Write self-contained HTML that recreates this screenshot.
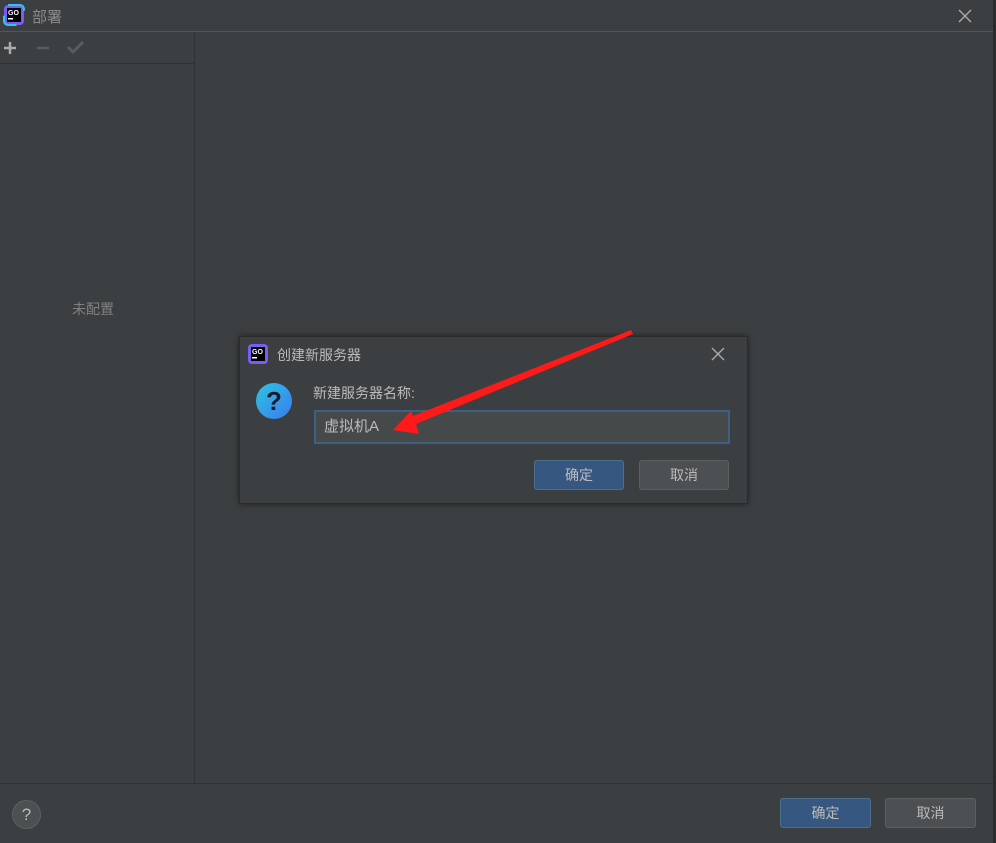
<!DOCTYPE html>
<html><head><meta charset="utf-8"><style>
*{margin:0;padding:0;box-sizing:border-box}
body{width:996px;height:843px;background:#3c3f41;font-family:"Liberation Sans","Noto Sans CJK SC",sans-serif;color:#bbb;position:relative;overflow:hidden;font-size:14px}
.a{position:absolute}
.btn{position:absolute;border-radius:3px;text-align:center;font-size:14px;color:#bbb}
.ok{background:#365880;border:1px solid #4c708c}
.cn{background:#4c5052;border:1px solid #5e6060}
</style></head><body>
<div class="a" style="left:0;top:0;width:996px;height:32px;background:#3c3f41;border-bottom:1px solid #555"></div>
<div class="a" style="left:993px;top:0;width:3px;height:843px;background:#2b2b2b"></div>
<svg class="a" style="left:3px;top:4px" width="22" height="22" viewBox="0 0 22 22"><rect x="1" y="1" width="20" height="20" rx="4" fill="#7b5cf0"/><rect x="1" y="1" width="20" height="20" rx="4" fill="none" stroke="#2fc7e8" stroke-width="2" stroke-dasharray="20 20"/><rect x="4" y="4" width="14" height="14" fill="#000"/><text x="5" y="11" font-size="7" fill="#fff" font-family="Liberation Sans" font-weight="bold">GO</text><rect x="5" y="14" width="5" height="1.5" fill="#fff"/></svg>
<div class="a" style="left:32px;top:6px;font-size:15px;color:#8a8a8a">部署</div>
<svg class="a" style="left:958px;top:9px" width="14" height="14"><path d="M1 1L13 13M13 1L1 13" stroke="#aaa" stroke-width="1.4"/></svg>
<div class="a" style="left:0;top:33px;width:195px;height:750px;border-right:1px solid #2f3133"></div>
<div class="a" style="left:0;top:63px;width:194px;height:1px;background:#323232"></div>
<svg class="a" style="left:3px;top:41px" width="14" height="14"><path d="M7 1V13M1 7H13" stroke="#aaa" stroke-width="2.5"/></svg>
<svg class="a" style="left:36px;top:41px" width="14" height="14"><path d="M1 7H13" stroke="#5a5d5f" stroke-width="2.5"/></svg>
<svg class="a" style="left:67px;top:40px" width="18" height="14"><path d="M1 7L6 12L16 2" fill="none" stroke="#5a5d5f" stroke-width="2.8"/></svg>
<div class="a" style="left:72px;top:299px;color:#808080">未配置</div>
<div class="a" style="left:0;top:783px;width:993px;height:1px;background:#2f3133"></div>
<div class="a" style="left:12px;top:800px;width:29px;height:29px;border-radius:50%;background:#4c5052;border:1px solid #5e6060;color:#bbb;text-align:center;line-height:27px;font-size:17px">?</div>
<div class="btn ok" style="left:780px;top:798px;width:91px;height:30px;line-height:28px">确定</div>
<div class="btn cn" style="left:885px;top:798px;width:91px;height:30px;line-height:28px">取消</div>
<div class="a" style="left:239px;top:336px;width:509px;height:168px;background:#3c3f41;border:1px solid #2b2b2b;box-shadow:0 0 6px rgba(0,0,0,.5)"></div>
<svg class="a" style="left:247px;top:343px" width="22" height="22" viewBox="0 0 22 22"><rect x="1" y="1" width="20" height="20" rx="4" fill="#7b5cf0"/><rect x="4" y="4" width="14" height="14" fill="#000"/><text x="5" y="11" font-size="7" fill="#fff" font-family="Liberation Sans" font-weight="bold">GO</text><rect x="5" y="14" width="5" height="1.5" fill="#fff"/></svg>
<div class="a" style="left:277px;top:345px;font-size:14px;color:#bbb">创建新服务器</div>
<svg class="a" style="left:711px;top:347px" width="14" height="14"><path d="M1 1L13 13M13 1L1 13" stroke="#aaa" stroke-width="1.4"/></svg>
<div class="a" style="left:256px;top:383px;width:36px;height:36px;border-radius:50%;background:linear-gradient(135deg,#2ec5e0,#3a7af0);color:#1a1a2a;font-weight:bold;font-size:26px;text-align:center;line-height:36px">?</div>
<div class="a" style="left:313px;top:383px;color:#bbb">新建服务器名称:</div>
<div class="a" style="left:314px;top:410px;width:416px;height:34px;border:2px solid #3d6185;background:#45494a;padding-left:8px;line-height:30px;color:#bbb;font-size:15px">虚拟机A</div>
<div class="btn ok" style="left:534px;top:460px;width:90px;height:30px;line-height:28px">确定</div>
<div class="btn cn" style="left:639px;top:460px;width:90px;height:30px;line-height:28px">取消</div>
<svg class="a" style="left:0;top:0" width="996" height="843"><polygon points="631,330 633,334 416,424 419,434 393,430 411,411 413,416" fill="#ff1a1a"/></svg>
</body></html>
